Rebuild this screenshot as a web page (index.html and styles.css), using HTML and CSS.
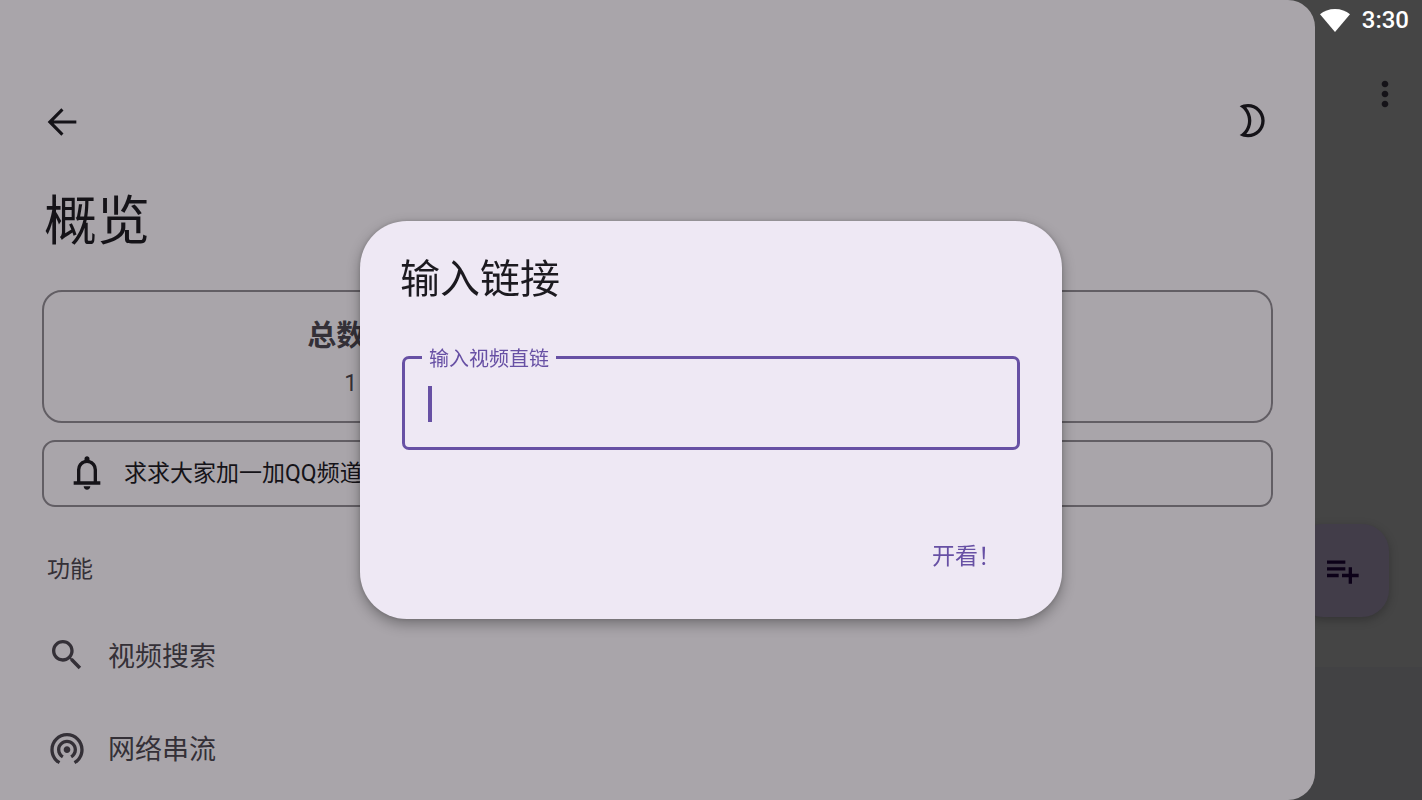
FILE: index.html
```html
<!DOCTYPE html>
<html lang="zh-CN">
<head>
    <meta charset="UTF-8">
    <meta name="viewport" content="width=device-width, initial-scale=1.0">
    <title>概览</title>
    <link rel="stylesheet" href="styles.css">
</head>
<body>
    <div class="screen">
        <aside class="drawer">
            <header class="drawer-header">
                <button class="icon-btn" aria-label="返回">
                    <svg class="icon" viewBox="0 0 24 24"><path d="M20.6 11.1H7l5.9-6L11.6 3.8 3.4 12l8.2 8.2 1.3-1.3-5.9-6h13.6z"/></svg>
                </button>
                <button class="icon-btn" aria-label="夜间模式">
                    <svg class="icon" viewBox="0 0 24 24"><path fill-rule="evenodd" d="M9 3.200c4.410 0 8 3.590 8 8s-3.590 8-8 8c-.34 0-.68-.02-1.010-.07C9.900 16.900 11 14.150 11 11.200s-1.100-5.700-3.010-7.930C8.320 3.220 8.660 3.200 9 3.200m0-2c-1.820 0-3.530.5-5 1.350 2.990 1.730 5 4.950 5 8.650s-2.010 6.920-5 8.650c1.470.85 3.180 1.350 5 1.350 5.520 0 10-4.480 10-10S14.520 1.200 9 1.200z"/></svg>
                </button>
            </header>

            <h1 class="drawer-title">概览</h1>

            <section class="card stats">
                <div class="stat">
                    <span class="stat-name">总数量</span>
                    <span class="stat-value">1</span>
                </div>
                <div class="stat"></div>
            </section>

            <section class="card notice">
                <svg class="icon" viewBox="0 0 24 24"><path fill-rule="evenodd" d="M4 19v-2h2v-7q0-2.075 1.25-3.687Q8.5 4.7 10.5 4.2v-.7q0-.625.438-1.062Q11.375 2 12 2t1.063.438q.437.437.437 1.062v.7q2 .5 3.25 2.113Q18 7.925 18 10v7h2v2ZM12 22q-.825 0-1.412-.587Q10 20.825 10 20h4q0 .825-.587 1.413Q12.825 22 12 22Zm-4-5h8v-7q0-1.65-1.175-2.825Q13.65 6 12 6q-1.65 0-2.825 1.175Q8 8.35 8 10Z"/></svg>
                <span class="notice-text">求求大家加一加QQ频道</span>
            </section>

            <h2 class="section-label">功能</h2>
            <nav class="menu">
                <a class="menu-item" href="#search">
                    <svg class="icon" viewBox="0 0 24 24"><path d="M15.5 14h-.79l-.28-.27C15.41 12.59 16 11.11 16 9.5 16 5.91 13.09 3 9.5 3S3 5.91 3 9.5 5.91 16 9.5 16c1.61 0 3.09-.59 4.23-1.57l.27.28v.79l5 4.99L20.49 19l-4.99-5zm-6 0C7.01 14 5 11.99 5 9.5S7.01 5 9.5 5 14 7.01 14 9.5 11.99 14 9.5 14z"/></svg>
                    <span>视频搜索</span>
                </a>
                <a class="menu-item" href="#stream">
                    <svg class="icon" viewBox="0 0 24 24"><path d="M12 11c-1.1 0-2 .9-2 2s.9 2 2 2 2-.9 2-2-.9-2-2-2zm6 2c0-3.31-2.69-6-6-6s-6 2.69-6 6c0 2.22 1.21 4.15 3 5.19l1-1.74c-1.19-.7-2-1.97-2-3.45 0-2.21 1.79-4 4-4s4 1.79 4 4c0 1.48-.81 2.75-2 3.45l1 1.74c1.79-1.04 3-2.97 3-5.19zM12 3C6.48 3 2 7.48 2 13c0 3.7 2.01 6.92 4.99 8.65l1-1.73C5.61 18.53 4 15.96 4 13c0-4.42 3.58-8 8-8s8 3.58 8 8c0 2.96-1.61 5.53-4 6.92l1 1.73c2.99-1.73 5-4.95 5-8.65 0-5.52-4.48-10-10-10z"/></svg>
                    <span>网络串流</span>
                </a>
            </nav>
        </aside>

        <main class="page">
            <div class="status-bar">
                <svg class="wifi" viewBox="0 0 30 23"><path d="M15 23L0 5.2C4 2 9 0 15 0s11 2 15 5.2z"/></svg>
                <span>3:30</span>
            </div>
            <button class="icon-btn more" aria-label="更多">
                <svg class="icon" viewBox="0 0 24 24"><path d="M12 8c1.1 0 2-.9 2-2s-.9-2-2-2-2 .9-2 2 .9 2 2 2zm0 2c-1.1 0-2 .9-2 2s.9 2 2 2 2-.9 2-2-.9-2-2-2zm0 6c-1.1 0-2 .9-2 2s.9 2 2 2 2-.9 2-2-.9-2-2-2z"/></svg>
            </button>
            <button class="fab" aria-label="添加">
                <svg class="icon" viewBox="0 0 24 24"><path d="M13.400 9.700H2.400v2h11v-2zm0-4H2.400v2h11v-2zm4 8v-4h-2v4h-4v2h4v4h2v-4h4v-2h-4zM2.400 15.700h7v-2h-7v2z"/></svg>
            </button>
            <div class="bottom-bar"></div>
        </main>
    </div>

    <div class="overlay">
        <form class="dialog" role="dialog" aria-labelledby="dialog-title">
            <h2 class="dialog-title" id="dialog-title">输入链接</h2>
            <fieldset class="field">
                <legend><label for="link">输入视频直链</label></legend>
                <span class="caret"></span>
                <input id="link" type="text" autocomplete="off">
            </fieldset>
            <div class="dialog-actions">
                <button class="text-btn" type="button">开看！</button>
            </div>
        </form>
    </div>
</body>
</html>
```
FILE: styles.css
```css
:root {
    --drawer: #a9a5aa;
    --page: #454545;
    --ink: #151318;
    --ink-soft: #343037;
    --outline: #625e64;
    --primary: #6750a4;
    --dialog: #eee8f4;
}

* {
    box-sizing: border-box;
}

body {
    margin: 0;
    background: var(--page);
    color: var(--ink);
    font-family: Roboto, "Noto Sans CJK SC", sans-serif;
    font-size: 23px;
}

h1,
h2 {
    margin: 0;
    font-weight: 400;
}

button {
    border: none;
    padding: 0;
    background: none;
    color: inherit;
    font: inherit;
    cursor: pointer;
}

.icon {
    display: block;
    flex: none;
    width: 40px;
    height: 40px;
    fill: currentColor;
}

.screen {
    display: flex;
    height: 100vh;
    overflow: hidden;
}

/* Drawer */
.drawer {
    position: relative;
    z-index: 1;
    flex: 1;
    padding: 102px 42px 0;
    background: var(--drawer);
    border-radius: 0 27px 27px 0;
    overflow: hidden;
}

.drawer-header {
    display: flex;
    justify-content: space-between;
}

.drawer-title {
    margin: 47px 0 34px;
    padding-left: 2px;
    font-size: 53px;
    line-height: 67px;
}

.card {
    display: flex;
    border: 2px solid var(--outline);
}

.stats {
    padding: 24px 0 20px;
    border-radius: 20px;
}

.stat {
    flex: 1;
    display: flex;
    flex-direction: column;
    align-items: center;
    gap: 11px;
    color: var(--ink-soft);
}

.stat-name {
    font-size: 29px;
    font-weight: 700;
    line-height: 40px;
}

.stat-value {
    line-height: 34px;
}

.notice {
    align-items: center;
    gap: 17px;
    margin-top: 17px;
    padding: 11px 23px 12px;
    border-radius: 13px;
}

.notice-text {
    padding-bottom: 4px;
}

.section-label {
    margin: 40px 0 15px;
    padding-left: 5px;
    color: var(--ink-soft);
    font-size: 23px;
    line-height: 46px;
}

.menu-item {
    display: flex;
    align-items: center;
    gap: 21px;
    height: 93px;
    padding-left: 5px;
    color: var(--ink-soft);
    font-size: 27px;
    text-decoration: none;
}

/* Page behind the drawer */
.page {
    display: flex;
    flex-direction: column;
    align-items: flex-end;
    width: 107px;
}

.status-bar {
    display: flex;
    align-items: center;
    gap: 12px;
    height: 40px;
    padding-right: 13px;
    color: #fff;
    font-size: 24px;
    font-weight: 500;
}

.wifi {
    width: 30px;
    height: 23px;
    fill: currentColor;
}

.more {
    margin: 34px 17px 0 0;
}

.fab {
    display: flex;
    align-items: center;
    justify-content: center;
    flex: none;
    width: 93px;
    height: 93px;
    margin: auto 33px 50px 0;
    border-radius: 27px;
    background: #423d49;
    color: #0c0118;
    box-shadow: 0 3px 10px rgba(0, 0, 0, 0.25);
}

.bottom-bar {
    align-self: stretch;
    height: 133px;
    margin-left: -30px;
    background: #424244;
}

/* Dialog */
.overlay {
    position: fixed;
    inset: 0;
    z-index: 2;
    display: flex;
    align-items: center;
    justify-content: center;
    padding-top: 39px;
}

.dialog {
    width: 702px;
    max-width: 90%;
    padding: 34px 40px 33px;
    border-radius: 47px;
    background: var(--dialog);
    box-shadow: 0 5px 14px rgba(0, 0, 0, 0.32), 0 0 4px rgba(0, 0, 0, 0.15);
}

.dialog-title {
    margin-bottom: 37px;
    color: #1c1a20;
    font-size: 40px;
    line-height: 50px;
}

.field {
    position: relative;
    margin: 0 2px;
    padding: 0 20px 17px 17px;
    border: 3px solid var(--primary);
    border-radius: 7px;
}

.field legend {
    padding: 2px 7px 0;
    color: var(--primary);
    font-size: 20px;
    line-height: 30px;
}

.field input {
    display: block;
    width: 100%;
    height: 56px;
    padding: 0 7px;
    border: none;
    outline: none;
    background: none;
    color: #1c1a20;
    font: inherit;
    font-size: 27px;
}

.caret {
    position: absolute;
    top: 12px;
    left: 23px;
    width: 4px;
    height: 36px;
    background: var(--primary);
}

.dialog-actions {
    display: flex;
    justify-content: flex-end;
    margin-top: 73px;
}

.text-btn {
    height: 63px;
    padding: 0 21px;
    color: var(--primary);
}
```
